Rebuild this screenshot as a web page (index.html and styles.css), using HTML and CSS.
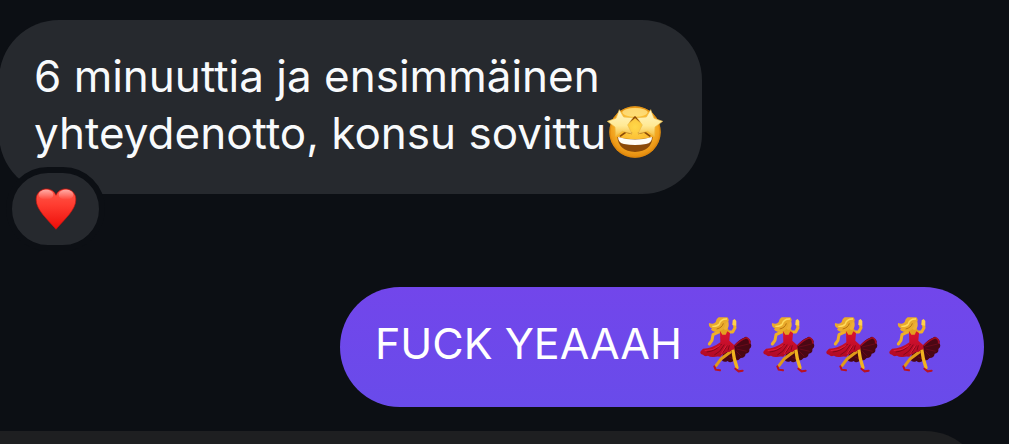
FILE: index.html
```
<!DOCTYPE html>
<html lang="fi">
<head>
  <meta charset="UTF-8">
  <meta name="viewport" content="width=device-width, initial-scale=1.0">
  <title>Chat</title>
  <link rel="stylesheet" href="styles.css">
</head>
<body>
  <!-- shared emoji shapes -->
  <svg class="sprites" aria-hidden="true">
    <defs>
      <radialGradient id="gold" cx="0.5" cy="0.4" r="0.62">
        <stop offset="0" stop-color="#ffd84a"/>
        <stop offset="0.55" stop-color="#fbb62c"/>
        <stop offset="1" stop-color="#e2860a"/>
      </radialGradient>
      <linearGradient id="star" x1="0" y1="0" x2="0" y2="1">
        <stop offset="0" stop-color="#fff6c6"/>
        <stop offset="0.6" stop-color="#ffe995"/>
        <stop offset="1" stop-color="#f5bd3c"/>
      </linearGradient>
      <linearGradient id="heart" x1="0" y1="0" x2="0" y2="1">
        <stop offset="0" stop-color="#ff5a4c"/>
        <stop offset="0.4" stop-color="#ff3c30"/>
        <stop offset="1" stop-color="#ec0c08"/>
      </linearGradient>
      <linearGradient id="shine" x1="0" y1="0" x2="0" y2="1">
        <stop offset="0" stop-color="#ffffff" stop-opacity="0.5"/>
        <stop offset="1" stop-color="#ffffff" stop-opacity="0"/>
      </linearGradient>
      <linearGradient id="dress" x1="0" y1="0" x2="0" y2="1">
        <stop offset="0" stop-color="#dc1230"/>
        <stop offset="1" stop-color="#b00a25"/>
      </linearGradient>
      <symbol id="dancer" viewBox="18 18 156 168">
        <!-- back of the skirt -->
        <path fill="#4a0714" d="M98 98 L122 103 Q133 86 150 80 Q158 73 162 83 Q173 86 169 96 Q176 107 166 114 Q168 126 155 128 Q153 141 140 141 Q132 151 121 148 Q109 158 101 150 Q88 157 82 145Z"/>
        <path fill="none" stroke="#a30b24" stroke-width="5" d="M122 104 Q138 87 157 80 Q169 84 167 98"/>
        <path fill="none" stroke="#7a0a1c" stroke-width="2" d="M126 108 L164 99 M128 114 L158 121 M127 121 L142 136 M105 138 L119 144"/>
        <!-- legs -->
        <path fill="none" stroke="#e09a18" stroke-width="9" stroke-linecap="round" stroke-linejoin="round" d="M108 124 L82 143 L66 164"/>
        <path fill="none" stroke="#f2b31f" stroke-width="10" stroke-linecap="round" stroke-linejoin="round" d="M116 114 L121 143 L129 170"/>
        <path fill="none" stroke="#b91223" stroke-width="6" stroke-linecap="round" d="M61 166 L65 176 L78 178 M124 173 L134 181 L146 179"/>
        <!-- arms -->
        <path fill="none" stroke="#efb027" stroke-width="9" stroke-linecap="round" stroke-linejoin="round" d="M78 61 L57 71 L54 88 L46 99"/>
        <path fill="none" stroke="#efb027" stroke-width="9" stroke-linecap="round" stroke-linejoin="round" d="M98 63 L116 63 L123 50 L121 38"/>
        <path fill="#ffd04c" d="M115 42 L116 28 L122 24 L127 30 L127 44Z"/>
        <!-- neck and shoulders -->
        <path fill="#e3a020" d="M75 57 L86 46 L99 49 L107 62 L100 78 L79 75Z"/>
        <!-- dress -->
        <path fill="url(#dress)" d="M78 60 L85 71 L95 71 L100 61 L108 66 L106 89 L121 103 L122 115 Q112 116 106 123 Q99 120 91 128 Q84 130 79 137 Q68 135 60 138 Q48 139 42 134 Q32 138 27 131 Q16 130 20 121 L27 113 Q54 113 79 94Z"/>
        <path fill="none" stroke="#850718" stroke-width="3" d="M83 99 Q65 121 38 123 M91 101 Q79 124 61 132 M100 104 L86 125 M106 103 L102 118"/>
        <path fill="none" stroke="#f02b42" stroke-width="2" d="M79 103 Q58 119 32 119 M97 104 L81 129"/>
        <!-- head and hair -->
        <path fill="#eeb034" d="M84 26 Q104 24 104 38 Q105 51 96 57 Q85 55 82 43Z"/>
        <path fill="#e9aa2b" d="M74 19 L100 19 Q107 27 102 33 Q94 34 93 44 Q88 58 78 60 Q67 66 55 59 Q48 56 54 52 Q42 48 45 36 Q59 42 65 33 Q67 23 74 19Z"/>
        <path fill="none" stroke="#ffdb5c" stroke-width="4" d="M99 24 Q80 23 76 39 Q70 47 55 46"/>
        <path fill="none" stroke="#b87310" stroke-width="3" d="M88 37 Q85 50 68 54"/>
      </symbol>
    </defs>
  </svg>

  <main class="chat">
    <div class="message incoming">
      <p class="bubble">6 minuuttia ja ensimmäinen<br>yhteydenotto, konsu sovittu<svg class="emoji face" viewBox="0 0 168 156" role="img" aria-label="🤩">
        <circle cx="84" cy="78" r="77" fill="url(#gold)"/>
        <circle cx="84" cy="78" r="75" fill="none" stroke="#dc860b" stroke-width="4" opacity="0.7"/>
        <ellipse cx="84" cy="19" rx="38" ry="13" fill="#fff0a0" opacity="0.6"/>
        <path fill="#8b4a08" d="M31 93 Q84 107 137 93 Q134 135 84 138 Q35 135 31 93Z"/>
        <path fill="#fffdf5" d="M33 93 Q84 108 135 93 Q135 111 117 114 Q84 120 51 114 Q34 111 33 93Z"/>
        <path fill="none" stroke="#8b4a08" stroke-width="5" d="M66 48 L84 33 L101 48 M39 91 L57 78 L75 82 M93 82 L112 78 L130 91"/>
        <path fill="url(#star)" stroke="#edb945" stroke-width="2" stroke-linejoin="round" d="M37 11 L50 33 L78 35 L62 57 L75 83 L46 76 L26 91 L24 63 L1 46 L27 37Z"/>
        <path fill="url(#star)" stroke="#edb945" stroke-width="2" stroke-linejoin="round" d="M131 11 L118 33 L90 35 L106 57 L93 83 L122 76 L142 91 L144 63 L167 46 L141 37Z"/>
      </svg></p>
      <button class="reaction" type="button" aria-label="❤️">
        <svg class="heart" viewBox="0 0 126 126" aria-hidden="true">
          <path fill="url(#heart)" stroke="#c9140d" stroke-width="2" d="M63 22 C53 -4 15 -4 5 24 C-4 60 33 88 63 124 C93 88 130 60 121 24 C111 -4 73 -4 63 22Z"/>
          <ellipse cx="33" cy="20" rx="22" ry="15" fill="url(#shine)"/>
          <ellipse cx="93" cy="20" rx="22" ry="15" fill="url(#shine)"/>
        </svg>
      </button>
    </div>

    <div class="message outgoing">
      <p class="bubble">FUCK YEAAAH <span class="dancers" role="img" aria-label="💃💃💃💃"><svg class="emoji"><use href="#dancer"/></svg><svg class="emoji"><use href="#dancer"/></svg><svg class="emoji"><use href="#dancer"/></svg><svg class="emoji"><use href="#dancer"/></svg></span></p>
    </div>

    <div class="composer"></div>
  </main>
</body>
</html>
```
FILE: styles.css
```
* {
  box-sizing: border-box;
}
body {
  margin: 0;
  background-color: #0c0f14;
  color: #f8fafc;
  font-family: Inter, "Liberation Sans", sans-serif;
  font-size: 44px;
  line-height: 57px;
}
.sprites {
  position: absolute;
  width: 0;
  height: 0;
}
.chat {
  display: flex;
  flex-direction: column;
  height: 100vh;
  padding-top: 20px;
  overflow: hidden;
}
.message {
  position: relative;
  display: flex;
  flex-shrink: 0;
}
.bubble {
  margin: 0;
  border-radius: 60px;
}
.incoming {
  align-self: flex-start;
  margin-left: -1px;
}
.incoming .bubble {
  padding: 28px 39px 32px 35px;
  background-color: #26292e;
}
.outgoing {
  align-self: flex-end;
  margin: 93px 25px 24px 0;
}
.outgoing .bubble {
  padding: 28px 43px 35px 35px;
  background-image: linear-gradient(#7246eb, #694bea);
  color: #fff;
  font-size: 43px;
}
.emoji {
  width: 52px;
  height: 56px;
  vertical-align: middle;
}
.face {
  width: 56px;
  height: 52px;
  margin: -10px 0 0 1px;
}
.dancers {
  display: inline-flex;
  gap: 11px;
  margin: -8px 0 -4px 6px;
  vertical-align: middle;
}
.reaction {
  position: absolute;
  left: 7px;
  bottom: -57px;
  display: flex;
  justify-content: center;
  align-items: center;
  width: 99px;
  height: 84px;
  padding: 0;
  border: 6px solid #0c0f14;
  border-radius: 42px;
  background-color: #26292e;
}
.heart {
  width: 42px;
  height: 42px;
}
.composer {
  flex: 1 0 120px;
  margin-right: 24px;
  border-top-right-radius: 60px;
  background-color: #1e1f21;
}
```
